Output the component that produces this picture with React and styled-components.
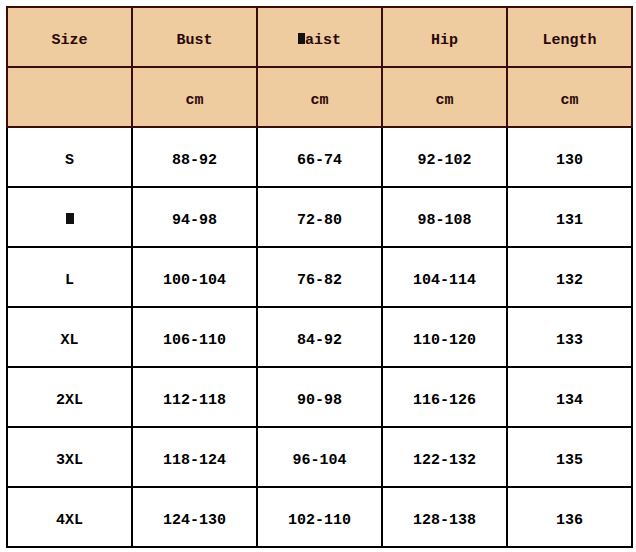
import React from "react"
import styled, { createGlobalStyle } from "styled-components"

const GlobalStyle = createGlobalStyle`
  html, body {
    margin: 0;
    padding: 0;
    background: #ffffff;
  }
  body {
    padding: 6px;
    font-family: "Liberation Mono", "DejaVu Sans Mono", monospace;
  }
`

const Table = styled.table`
  border-collapse: collapse;
  border: 2px solid #000;
  table-layout: fixed;
  width: 627px;
`

const Cell = styled.td`
  width: 123px;
  height: 52px;
  padding: 6px 0 0;
  border: 2px solid ${props => (props.$head ? "#3a0c0c" : "#000")};
  background: ${props => (props.$head ? "#efcc9f" : "#fff")};
  color: ${props => (props.$head ? "#2a0808" : "#000")};
  text-align: center;
  vertical-align: middle;
  font-size: 15px;
  font-weight: bold;
  line-height: 1;
`

// letters the source font could not draw show up as a solid block
const Tofu = styled.span`
  display: inline-block;
  width: ${props => props.$w || 7}px;
  height: 11px;
  background: #111;
  color: transparent;
  overflow: hidden;
  vertical-align: baseline;
  line-height: 11px;
  font-size: 10px;
`

const head = ["Size", "Bust", "Waist", "Hip", "Length"]

const rows = [
  ["S", "88-92", "66-74", "92-102", "130"],
  ["M", "94-98", "72-80", "98-108", "131"],
  ["L", "100-104", "76-82", "104-114", "132"],
  ["XL", "106-110", "84-92", "110-120", "133"],
  ["2XL", "112-118", "90-98", "116-126", "134"],
  ["3XL", "118-124", "96-104", "122-132", "135"],
  ["4XL", "124-130", "102-110", "128-138", "136"],
]

const renderText = text => {
  if (text === "M") return <Tofu $w={8}>M</Tofu>
  if (text === "Waist")
    return (
      <>
        <Tofu>W</Tofu>aist
      </>
    )
  return text
}

const App = () => (
  <>
    <GlobalStyle />
    <Table>
      <tbody>
        <tr>
          {head.map(h => (
            <Cell $head key={h}>
              {renderText(h)}
            </Cell>
          ))}
        </tr>
        <tr>
          <Cell $head />
          {head.slice(1).map(h => (
            <Cell $head key={h}>
              cm
            </Cell>
          ))}
        </tr>
        {rows.map(r => (
          <tr key={r[0]}>
            {r.map((v, i) => (
              <Cell key={i}>{renderText(v)}</Cell>
            ))}
          </tr>
        ))}
      </tbody>
    </Table>
  </>
)

export default App
